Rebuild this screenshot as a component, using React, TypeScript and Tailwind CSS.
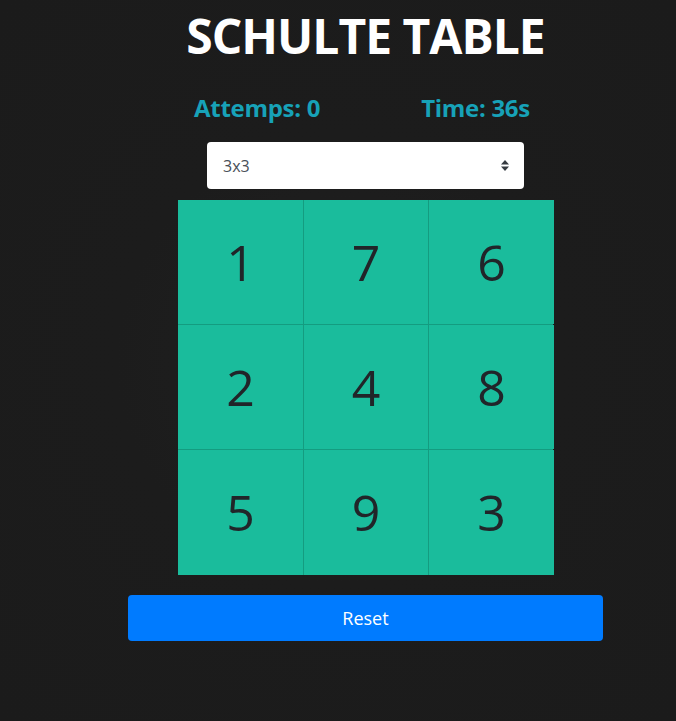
import { useState } from 'react';

const cells = [1, 7, 6, 2, 4, 8, 5, 9, 3];

export default function App() {
  const [size, setSize] = useState('3x3');

  return (
    <div
      className="min-h-[721px] w-full bg-[#1b1b1b] bg-[radial-gradient(circle_at_50%_50%,#202020_0%,#1c1c1c_45%,#1b1b1b_100%)]"
      style={{ fontFamily: '"Open Sans", "Noto Sans", sans-serif' }}
    >
      <div className="w-full pl-[55px] flex flex-col items-center">
        <h1 className="mt-[3px] text-[48px] leading-[66px] font-bold text-white tracking-[-1px]">
          SCHULTE TABLE
        </h1>

        <div className="mt-[23px] pr-[7px] flex gap-[101px] text-[24px] leading-[32px] font-bold text-[#17a2b8] tracking-[-0.3px]">
          <span>Attemps: 0</span>
          <span>Time: 36s</span>
        </div>

        <div className="mt-[18px] relative w-[317px] h-[47px]">
          <select
            value={size}
            onChange={(e) => setSize(e.target.value)}
            className="appearance-none w-full h-full bg-white rounded-[4px] pl-[16px] text-[16px] text-[#495057] outline-none"
          >
            <option>3x3</option>
            <option>4x4</option>
            <option>5x5</option>
          </select>
          <svg
            className="absolute right-[14px] top-[17px] pointer-events-none"
            width="10"
            height="13"
            viewBox="0 0 10 13"
          >
            <path d="M1 5.5 L5 1 L9 5.5 Z" fill="#343a40" />
            <path d="M1 7.5 L5 12 L9 7.5 Z" fill="#343a40" />
          </svg>
        </div>

        <div className="mt-[11px] grid grid-cols-[125px_124px_125px] grid-rows-[124px_124px_125px] gap-px bg-[#149c80] w-[375px] h-[375px]">
          {cells.map((n) => (
            <div
              key={n}
              className="bg-[#1abc9c] flex items-center justify-center text-[50px] text-[#212529]"
            >
              {n}
            </div>
          ))}
        </div>

        <button className="mt-[20px] w-[475px] h-[46px] rounded-[4px] bg-[#007bff] text-white text-[18px]">
          Reset
        </button>
      </div>
    </div>
  );
}
